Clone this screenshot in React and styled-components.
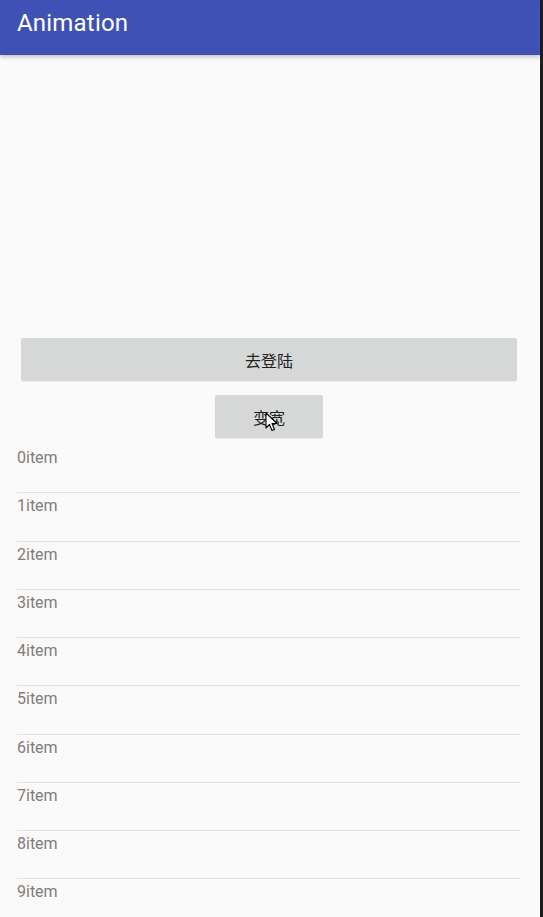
import React from "react";
import styled, { createGlobalStyle } from "styled-components";

const GlobalStyle = createGlobalStyle`
  html, body {
    margin: 0;
    padding: 0;
    background: #1e1e20;
  }
  body {
    font-family: Roboto, "Noto Sans CJK SC", sans-serif;
  }
`;

const Frame = styled.div`
  display: flex;
  width: 543px;
  height: 917px;
  overflow: hidden;
`;

const Screen = styled.div`
  position: relative;
  width: 540px;
  height: 100%;
  background: #fafafa;
  display: flex;
  flex-direction: column;
`;

const Edge = styled.div`
  width: 3px;
  background: #1e1e20;
`;

const AppBar = styled.header`
  height: 55px;
  flex-shrink: 0;
  background: #3f51b5;
  display: flex;
  align-items: center;
  padding-left: 17px;
  box-shadow: 0 2px 4px rgba(0, 0, 0, 0.22);
  z-index: 1;
`;

const Title = styled.h1`
  margin: -10px 0 0 0;
  font-family: Roboto, sans-serif;
  font-size: 24px;
  font-weight: 400;
  color: #ffffff;
  letter-spacing: 0.2px;
`;

const Content = styled.main`
  display: flex;
  flex-direction: column;
  padding-top: 283px;
`;

const Button = styled.button`
  height: 43px;
  border: none;
  border-radius: 2px;
  background: #d6d7d7;
  color: #222;
  font-family: Roboto, "Noto Sans CJK SC", sans-serif;
  font-size: 16px;
  padding: 0;
  box-shadow: 0 1px 1px rgba(0, 0, 0, 0.06);
  width: ${(p) => (p.$wide ? "496px" : "108px")};
  margin-left: ${(p) => (p.$wide ? "21px" : "215px")};
  margin-top: ${(p) => p.$top || 0}px;
`;

const CursorWrap = styled.span`
  position: relative;
  display: inline-block;
`;

const Cursor = styled.svg`
  position: absolute;
  left: 12px;
  top: 7px;
  width: 14px;
  height: 20px;
  pointer-events: none;
`;

const List = styled.ul`
  list-style: none;
  margin: 7px 0 0 17px;
  padding: 0;
  width: 504px;
`;

const Row = styled.li`
  height: 48.25px;
  box-sizing: border-box;
  padding-top: 3px;
  font-size: 16px;
  line-height: 20px;
  color: #7d7d7d;
  border-bottom: ${(p) => (p.$last ? "none" : "1px solid #e2e2e2")};
`;

const items = Array.from({ length: 10 }, (_, i) => `${i}item`);

export default function App() {
  return (
    <>
      <GlobalStyle />
      <Frame>
        <Screen>
          <AppBar>
            <Title>Animation</Title>
          </AppBar>
          <Content>
            <Button $wide>去登陆</Button>
            <Button $top={14}>
              <CursorWrap>
                变宽
                <Cursor viewBox="0 0 14 20">
                  <path
                    d="M1 1 L1 16 L4.5 12.5 L7 18.5 L9.5 17.5 L7 11.5 L12 11.5 Z"
                    fill="#ffffff"
                    stroke="#000000"
                    strokeWidth="1.1"
                    strokeLinejoin="round"
                  />
                </Cursor>
              </CursorWrap>
            </Button>
            <List>
              {items.map((t, i) => (
                <Row key={t} $last={i === items.length - 1}>
                  {t}
                </Row>
              ))}
            </List>
          </Content>
        </Screen>
        <Edge />
      </Frame>
    </>
  );
}
